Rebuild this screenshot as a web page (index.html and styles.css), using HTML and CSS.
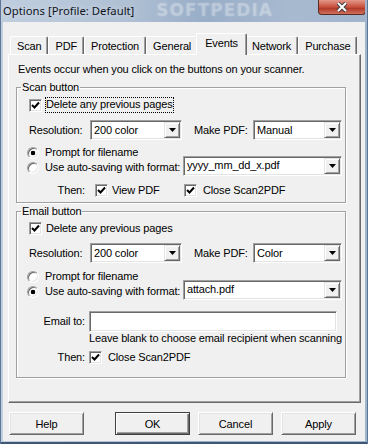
FILE: index.html
```html
<!DOCTYPE html>
<html>
	<head>
		<title>Options [Profile: Default]</title>

		<link rel="stylesheet" href="styles.css">
	</head>

	<body>
		<div class="window">
			<div class="titlebar">
				<span class="title">Options [Profile: Default]</span>
				<span class="watermark">SOFTPEDIA</span>
				<span class="close">
					<svg width="14" height="11" viewBox="0 0 14 11"><path d="M3 1 L11 9 M11 1 L3 9" stroke="#404040" stroke-width="4"/><path d="M3 1 L11 9 M11 1 L3 9" stroke="#fff" stroke-width="2"/></svg>
				</span>
			</div>

			<div class="client">
				<div class="tabs">
					<span class="tab">Scan</span>
					<span class="tab">PDF</span>
					<span class="tab">Protection</span>
					<span class="tab">General</span>
					<span class="tab tab-active">Events</span>
					<span class="tab">Network</span>
					<span class="tab">Purchase</span>
				</div>

				<div class="page">
					<p class="intro">Events occur when you click on the buttons on your scanner.</p>

					<fieldset class="group group-scan">
						<legend>Scan button</legend>
						<div class="row row-check">
							<span class="check"><svg width="9" height="9" viewBox="0 0 9 9"><path d="M1 4 L3.5 6.5 L8 1.5" fill="none" stroke="#000" stroke-width="2"/></svg></span>
							<span class="focus">Delete any previous pages</span>
						</div>
						<div class="row row-res">
							<span class="lbl lbl-res">Resolution:</span>
							<span class="combo combo-res"><span class="combo-text">200 color</span><span class="drop"><svg width="7" height="4" viewBox="0 0 7 4"><polygon points="0,0 7,0 3.5,4" fill="#000"/></svg></span></span>
							<span class="lbl lbl-pdf">Make PDF:</span>
							<span class="combo combo-pdf"><span class="combo-text">Manual</span><span class="drop"><svg width="7" height="4" viewBox="0 0 7 4"><polygon points="0,0 7,0 3.5,4" fill="#000"/></svg></span></span>
						</div>
						<div class="row row-radio row-first">
							<span class="radio radio-on"></span>
							<span>Prompt for filename</span>
						</div>
						<div class="row row-radio">
							<span class="radio"></span>
							<span>Use auto-saving with format:</span>
							<span class="combo combo-format"><span class="combo-text">yyyy_mm_dd_x.pdf</span><span class="drop"><svg width="7" height="4" viewBox="0 0 7 4"><polygon points="0,0 7,0 3.5,4" fill="#000"/></svg></span></span>
						</div>
						<div class="row row-then">
							<span class="lbl lbl-then">Then:</span>
							<span class="check"><svg width="9" height="9" viewBox="0 0 9 9"><path d="M1 4 L3.5 6.5 L8 1.5" fill="none" stroke="#000" stroke-width="2"/></svg></span>
							<span class="opt-view">View PDF</span>
							<span class="check check-next"><svg width="9" height="9" viewBox="0 0 9 9"><path d="M1 4 L3.5 6.5 L8 1.5" fill="none" stroke="#000" stroke-width="2"/></svg></span>
							<span class="opt-close">Close Scan2PDF</span>
						</div>
					</fieldset>

					<fieldset class="group group-email">
						<legend>Email button</legend>
						<div class="row row-check">
							<span class="check"><svg width="9" height="9" viewBox="0 0 9 9"><path d="M1 4 L3.5 6.5 L8 1.5" fill="none" stroke="#000" stroke-width="2"/></svg></span>
							<span class="plain">Delete any previous pages</span>
						</div>
						<div class="row row-res">
							<span class="lbl lbl-res">Resolution:</span>
							<span class="combo combo-res"><span class="combo-text">200 color</span><span class="drop"><svg width="7" height="4" viewBox="0 0 7 4"><polygon points="0,0 7,0 3.5,4" fill="#000"/></svg></span></span>
							<span class="lbl lbl-pdf">Make PDF:</span>
							<span class="combo combo-pdf"><span class="combo-text">Color</span><span class="drop"><svg width="7" height="4" viewBox="0 0 7 4"><polygon points="0,0 7,0 3.5,4" fill="#000"/></svg></span></span>
						</div>
						<div class="row row-radio row-first">
							<span class="radio"></span>
							<span>Prompt for filename</span>
						</div>
						<div class="row row-radio">
							<span class="radio radio-on"></span>
							<span>Use auto-saving with format:</span>
							<span class="combo combo-format"><span class="combo-text">attach.pdf</span><span class="drop"><svg width="7" height="4" viewBox="0 0 7 4"><polygon points="0,0 7,0 3.5,4" fill="#000"/></svg></span></span>
						</div>
						<div class="row row-email">
							<span class="lbl lbl-then">Email to:</span>
							<span class="field"></span>
						</div>
						<p class="hint">Leave blank to choose email recipient when scanning</p>
						<div class="row row-then row-then-email">
							<span class="lbl lbl-then">Then:</span>
							<span class="check"><svg width="9" height="9" viewBox="0 0 9 9"><path d="M1 4 L3.5 6.5 L8 1.5" fill="none" stroke="#000" stroke-width="2"/></svg></span>
							<span class="opt-close">Close Scan2PDF</span>
						</div>
					</fieldset>
				</div>

				<div class="buttons">
					<button class="btn btn-help">Help</button>
					<button class="btn btn-default">OK</button>
					<button class="btn">Cancel</button>
					<button class="btn">Apply</button>
				</div>
			</div>
		</div>
	</body>
</html>
```

FILE: styles.css
```css
body
{
	margin: 0;
	font-family: "Liberation Sans", Arial, sans-serif;
	font-size: 11px;
	letter-spacing: -0.15px;
	color: #000000;
}

.window
{
	width: 368px;
	height: 444px;
	box-sizing: border-box;
	padding: 0 3px 3px 3px;
	display: flex;
	flex-direction: column;
	background: linear-gradient(to right, #c0cedf 0%, #afc0d4 35%, #98adc7 55%, #a8bad0 80%, #a0b4cc 100%);
	box-shadow: inset 1px 0 0 #5d7596, inset -1px 0 0 #5d7596, inset 0 -2px 0 #3f5676;
}

.titlebar
{
	height: 22px;
	display: flex;
	align-items: flex-start;
	overflow: hidden;
	white-space: nowrap;
}

.title
{
	font-family: "Noto Sans", "Liberation Sans", sans-serif;
	font-size: 11.3px;
	letter-spacing: 0;
	line-height: 22px;
	color: #10141c;
	text-shadow: 0 0 6px rgba(255, 255, 255, 0.6);
}

.watermark
{
	margin-left: 22px;
	font-family: "DejaVu Sans", sans-serif;
	font-weight: bold;
	font-size: 17px;
	line-height: 21px;
	letter-spacing: 1px;
	color: rgba(255, 255, 255, 0.18);
	text-shadow: 0 0 2px rgba(255, 255, 255, 0.25);
}

.close
{
	margin-left: auto;
	margin-right: -1px;
	width: 48px;
	height: 15px;
	flex-shrink: 0;
	box-sizing: border-box;
	display: flex;
	align-items: center;
	justify-content: center;
	border: 1px solid #5a2a24;
	border-top: none;
	border-radius: 0 0 4px 4px;
	background: linear-gradient(#e3988a, #c8503e 50%, #b23a2a 60%, #d0705c);
}

.client
{
	flex: 1;
	display: flex;
	flex-direction: column;
	padding: 11px 4px 0 5px;
	background-color: #f0f0f0;
}

.tabs
{
	display: flex;
	align-items: flex-end;
	height: 21px;
	padding-left: 2px;
	white-space: nowrap;
}

.tab
{
	height: 18px;
	box-sizing: border-box;
	padding: 0 6px;
	line-height: 18px;
	border-top: 1px solid #ffffff;
	border-left: 1px solid #ffffff;
	border-right: 1px solid #696969;
	border-radius: 2px 2px 0 0;
	box-shadow: inset -1px 0 0 #a0a0a0;
}

.tab-active
{
	position: relative;
	z-index: 1;
	height: 22px;
	margin: 0 -2px -1px -2px;
	padding: 0 8px 3px 8px;
	background-color: #f0f0f0;
}

.page
{
	height: 349px;
	box-sizing: border-box;
	padding-left: 7px;
	border-top: 1px solid #ffffff;
	border-left: 1px solid #ffffff;
	border-right: 1px solid #696969;
	border-bottom: 1px solid #696969;
	box-shadow: inset -1px -1px 0 #a0a0a0;
}

.intro
{
	margin: 8px 0 0 2px;
	line-height: 13px;
	white-space: nowrap;
}

.group
{
	width: 330px;
	box-sizing: border-box;
	margin: 5px 0 0 0;
	padding: 0 3px 4px 0;
	min-inline-size: 0;
	border: 1px solid #a0a0a0;
	box-shadow: inset 1px 1px 0 #ffffff, 1px 1px 0 #ffffff;
}

.group legend
{
	margin-left: 4px;
	padding: 0 1px;
	line-height: 13px;
}

.group-email
{
	margin-top: 2px;
	padding-bottom: 12px;
}

.row
{
	display: flex;
	align-items: center;
	height: 15px;
	line-height: 13px;
	white-space: nowrap;
}

.row-check
{
	height: 16px;
	margin-top: 3px;
}

.group-email .row-check
{
	margin-top: 2px;
}

.check
{
	width: 13px;
	height: 13px;
	flex-shrink: 0;
	box-sizing: border-box;
	margin-left: 12px;
	display: flex;
	align-items: center;
	justify-content: center;
	background-color: #ffffff;
	border: 1px solid;
	border-color: #a0a0a0 #ffffff #ffffff #a0a0a0;
	box-shadow: inset 1px 1px 0 #696969, inset -1px -1px 0 #e3e3e3;
}

.focus
{
	margin-left: 3px;
	padding: 1px 1px 2px 1px;
	outline: 1px dotted #000000;
	outline-offset: -1px;
}

.plain
{
	margin-left: 4px;
}

.row-res
{
	height: 20px;
	margin-top: 7px;
}

.lbl-res
{
	width: 61px;
	margin-left: 12px;
}

.lbl-pdf
{
	width: 59px;
	margin-left: 12px;
}

.combo
{
	height: 20px;
	flex-shrink: 0;
	box-sizing: border-box;
	display: flex;
	align-items: center;
	padding: 1px;
	background-color: #ffffff;
	border: 1px solid;
	border-color: #a0a0a0 #ffffff #ffffff #a0a0a0;
	box-shadow: inset 1px 1px 0 #696969, inset -1px -1px 0 #e3e3e3;
}

.combo-text
{
	flex: 1;
	padding-left: 2px;
}

.combo-res
{
	width: 92px;
}

.combo-pdf
{
	width: 89px;
}

.combo-format
{
	width: 159px;
	margin: 0 0 4px auto;
}

.drop
{
	width: 16px;
	height: 16px;
	box-sizing: border-box;
	display: flex;
	align-items: center;
	justify-content: center;
	background-color: #f0f0f0;
	border: 1px solid;
	border-color: #e3e3e3 #696969 #696969 #e3e3e3;
	box-shadow: inset 1px 1px 0 #ffffff, inset -1px -1px 0 #a0a0a0;
}

.row-first
{
	margin-top: 5px;
}

.group-email .row-first
{
	margin-top: 6px;
}

.radio
{
	width: 12px;
	height: 12px;
	flex-shrink: 0;
	box-sizing: border-box;
	margin: 0 6px 0 10px;
	border-radius: 50%;
	border: 1px solid;
	border-color: #a0a0a0 #ffffff #ffffff #a0a0a0;
	box-shadow: inset 1px 1px 0 #696969, inset -1px -1px 0 #e3e3e3;
	background-color: #ffffff;
}

.radio-on
{
	background: radial-gradient(circle, #000000 0, #000000 2px, #ffffff 2.6px);
}

.row-then
{
	margin-top: 8px;
}

.lbl-then
{
	width: 68px;
	text-align: right;
}

.row-then .check
{
	margin-left: 10px;
}

.row-then .check-next
{
	margin-left: 0;
}

.opt-view
{
	width: 72px;
	margin-left: 4px;
}

.opt-close
{
	margin-left: 6px;
}

.row-email
{
	height: 21px;
	margin-top: 12px;
}

.field
{
	width: 248px;
	height: 21px;
	box-sizing: border-box;
	margin-left: 4px;
	background-color: #ffffff;
	border: 1px solid;
	border-color: #a0a0a0 #ffffff #ffffff #a0a0a0;
	box-shadow: inset 1px 1px 0 #696969, inset -1px -1px 0 #e3e3e3;
}

.hint
{
	margin: 0 0 0 72px;
	line-height: 13px;
	white-space: nowrap;
}

.row-then-email
{
	margin-top: 5px;
}

.row-then-email .check
{
	margin-left: 4px;
}

.buttons
{
	display: flex;
	gap: 8px;
	margin-top: 9px;
	padding-right: 5px;
}

.btn
{
	width: 75px;
	height: 23px;
	padding: 0;
	font: inherit;
	letter-spacing: inherit;
	color: #000000;
	background-color: #f0f0f0;
	border: 1px solid;
	border-color: #ffffff #696969 #696969 #ffffff;
	box-shadow: inset 1px 1px 0 #e3e3e3, inset -1px -1px 0 #a0a0a0;
}

.btn-help
{
	margin-left: 1px;
}

.btn-default
{
	margin-left: auto;
	border-color: #404040;
	box-shadow: inset 1px 1px 0 #ffffff, inset -1px -1px 0 #696969, inset -2px -2px 0 #a0a0a0;
}
```
